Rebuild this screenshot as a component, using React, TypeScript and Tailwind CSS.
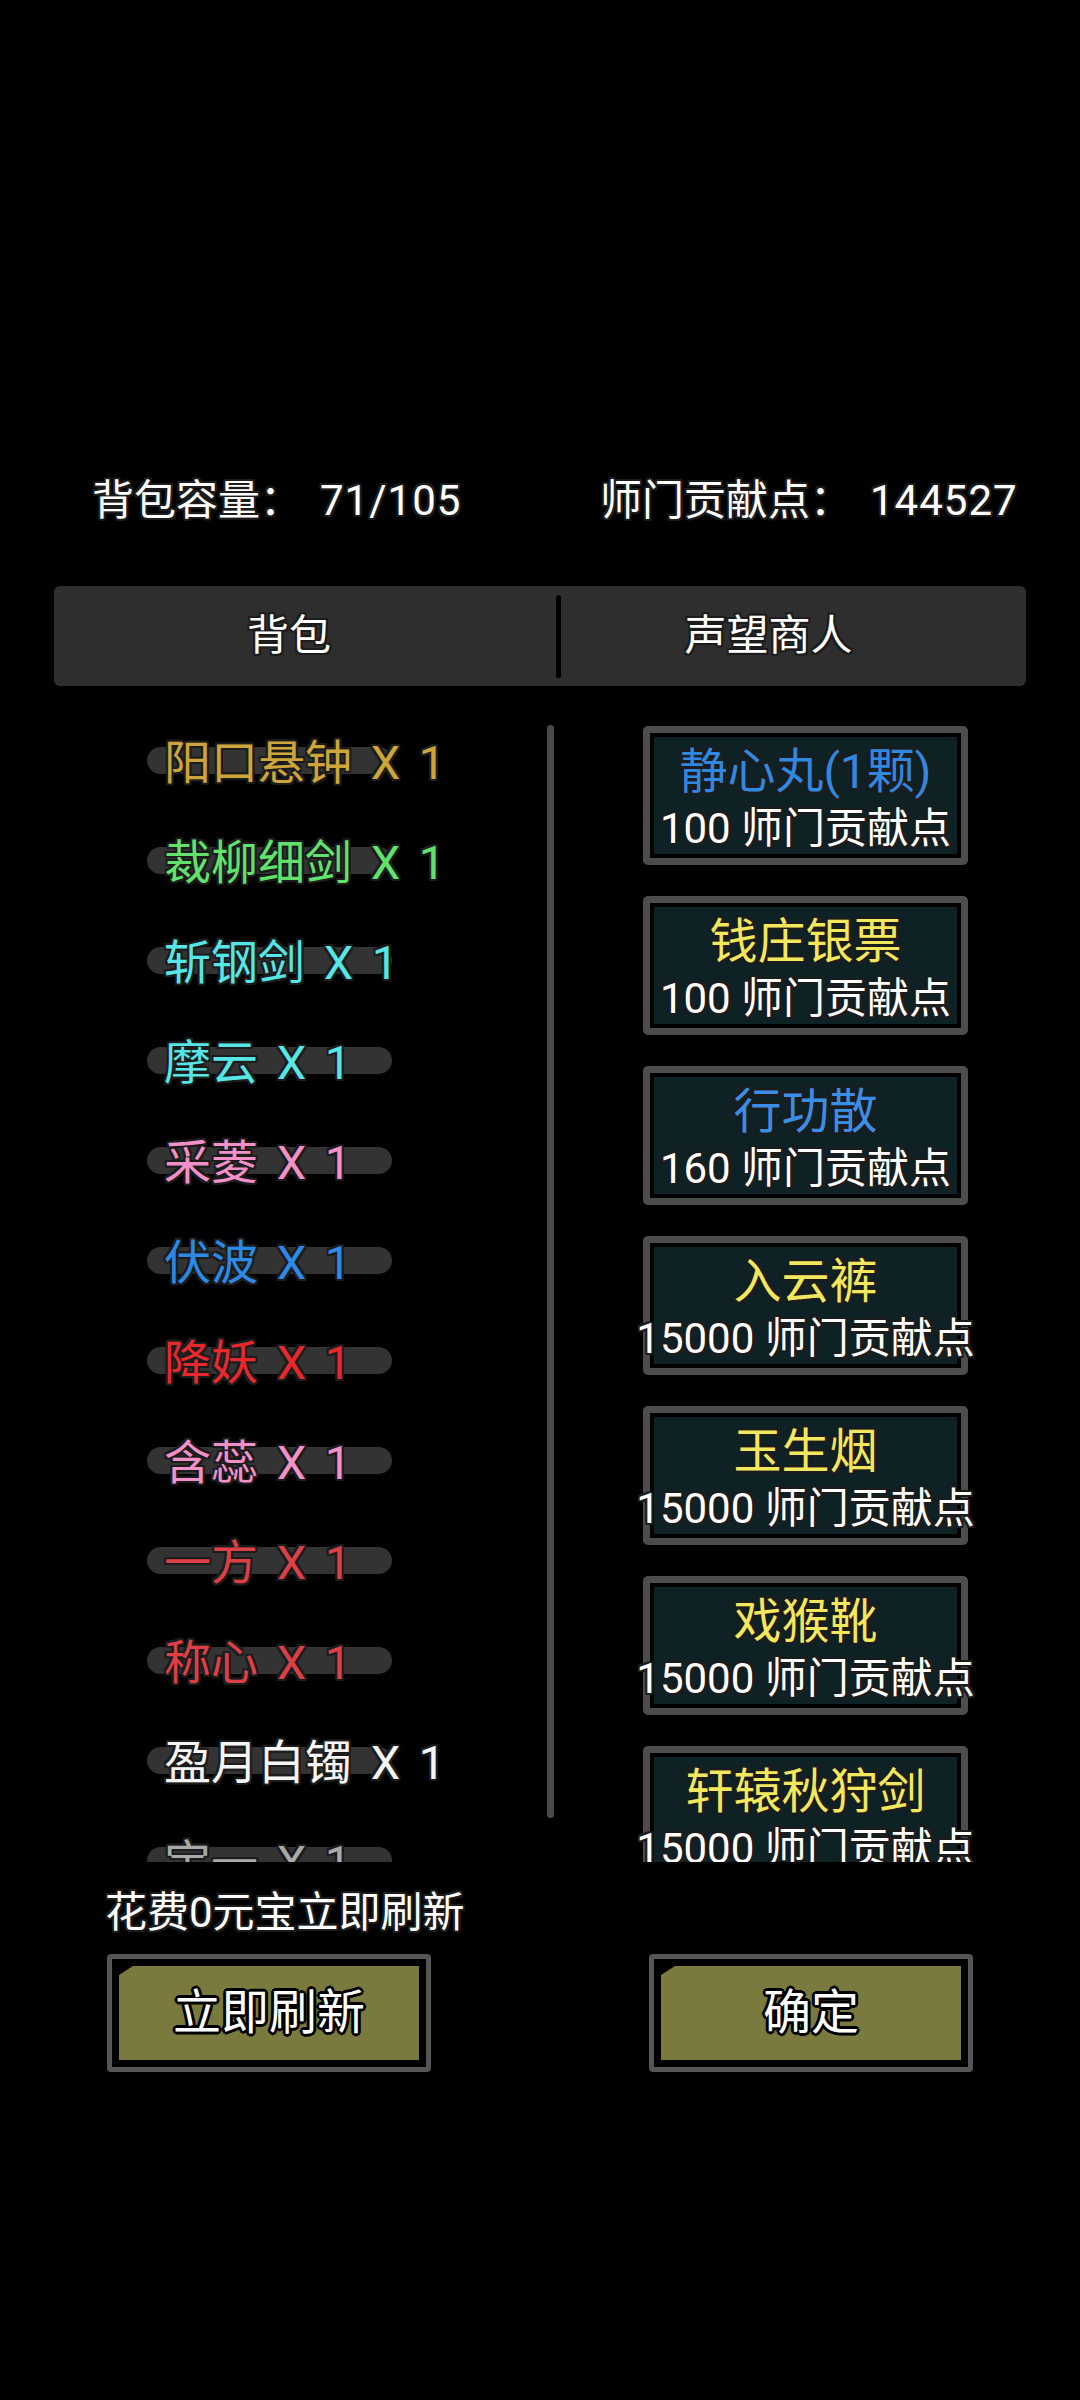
import React from 'react'

const FONT = "font-['Roboto','Noto_Sans_CJK_SC',sans-serif]"

const OUTLINE =
  '[text-shadow:2px_0_0_#1c1c1c,-2px_0_0_#1c1c1c,0_2px_0_#1c1c1c,0_-2px_0_#1c1c1c,2px_2px_0_#1c1c1c,-2px_-2px_0_#1c1c1c,2px_-2px_0_#1c1c1c,-2px_2px_0_#1c1c1c]'

const OUTLINE_BOLD =
  '[text-shadow:3px_0_0_#000,-3px_0_0_#000,0_3px_0_#000,0_-3px_0_#000,2px_2px_0_#000,-2px_-2px_0_#000,2px_-2px_0_#000,-2px_2px_0_#000]'

interface BagItem {
  name: string
  color: string
}

const BAG_ITEMS: BagItem[] = [
  { name: '阳口悬钟', color: 'text-[#cda53a]' },
  { name: '裁柳细剑', color: 'text-[#62e26c]' },
  { name: '斩钢剑', color: 'text-[#56e6e6]' },
  { name: '摩云', color: 'text-[#56e6e6]' },
  { name: '采菱', color: 'text-[#f191c8]' },
  { name: '伏波', color: 'text-[#2b8ae6]' },
  { name: '降妖', color: 'text-[#e8282c]' },
  { name: '含蕊', color: 'text-[#f191c8]' },
  { name: '一方', color: 'text-[#dc4046]' },
  { name: '称心', color: 'text-[#dc4046]' },
  { name: '盈月白镯', color: 'text-[#f4f4f4]' },
  { name: '宝一', color: 'text-[#a9a9a9]' },
]

interface ShopItem {
  name: string
  price: number
  color: string
}

const SHOP_ITEMS: ShopItem[] = [
  { name: '静心丸(1颗)', price: 100, color: 'text-[#3088e0]' },
  { name: '钱庄银票', price: 100, color: 'text-[#f2e85e]' },
  { name: '行功散', price: 160, color: 'text-[#3a8ee6]' },
  { name: '入云裤', price: 15000, color: 'text-[#f2e85e]' },
  { name: '玉生烟', price: 15000, color: 'text-[#f2e85e]' },
  { name: '戏猴靴', price: 15000, color: 'text-[#f2e85e]' },
  { name: '轩辕秋狩剑', price: 15000, color: 'text-[#f2e85e]' },
]

function BagRow({ item }: { item: BagItem }) {
  return (
    <div className="h-[100px] shrink-0 grid items-center">
      <div className="[grid-area:1/1] w-[245px] h-[27px] rounded-full bg-[#333333]" />
      <div
        className={`[grid-area:1/1] ml-[17px] pt-[6px] whitespace-nowrap text-[47px] leading-[56px] [word-spacing:7px] ${item.color} ${OUTLINE}`}
      >
        {item.name} X 1
      </div>
    </div>
  )
}

function ShopCard({ item }: { item: ShopItem }) {
  return (
    <div className="w-[325px] h-[139px] shrink-0 border-[7px] border-[#4d4d4d] rounded-[5px] bg-black p-[4px]">
      <div className="h-full bg-[#0e2226] flex flex-col items-center">
        <div className={`mt-[7px] whitespace-nowrap text-[48px] leading-[56px] ${item.color} ${OUTLINE}`}>
          {item.name}
        </div>
        <div className={`mt-[6px] whitespace-nowrap text-[42px] leading-[46px] text-white ${OUTLINE}`}>
          {item.price} 师门贡献点
        </div>
      </div>
    </div>
  )
}

function OliveButton({ label }: { label: string }) {
  return (
    <button className="w-[324px] h-[118px] border-[5px] border-[#555555] rounded-[4px] bg-black p-[7px]">
      <div className="h-full bg-[#7b7a3e] flex items-center justify-center [clip-path:polygon(14px_0,100%_0,100%_100%,0_100%,0_9px)]">
        <span className={`text-[48px] leading-[56px] text-white ${OUTLINE_BOLD}`}>{label}</span>
      </div>
    </button>
  )
}

export default function App() {
  return (
    <div className={`w-[1080px] h-[2400px] bg-black text-white ${FONT} flex flex-col`}>
      {/* header stats */}
      <div className="mt-[476px] flex pl-[92px] text-[42px] leading-[50px]">
        <span className={`w-[508px] whitespace-nowrap ${OUTLINE}`}>
          背包容量：<span className="ml-[18px] tracking-[1px]">71/105</span>
        </span>
        <span className={`whitespace-nowrap ${OUTLINE}`}>
          师门贡献点：<span className="ml-[18px] tracking-[1px]">144527</span>
        </span>
      </div>

      {/* tabs */}
      <div className="mt-[60px] mx-[54px] h-[100px] rounded-[6px] bg-[#2e2e2e] flex items-center">
        <div className="w-[502px] flex justify-center pr-[32px]">
          <span className={`text-[42px] leading-[50px] ${OUTLINE}`}>背包</span>
        </div>
        <div className="w-[5px] h-[83px] rounded-full bg-black" />
        <div className="flex-1 flex justify-center pr-[50px]">
          <span className={`text-[42px] leading-[50px] ${OUTLINE}`}>声望商人</span>
        </div>
      </div>

      {/* lists */}
      <div className="mt-[24px] h-[1152px] flex overflow-hidden">
        <div className="w-[547px] pl-[147px] flex flex-col">
          {BAG_ITEMS.map((item) => (
            <BagRow key={item.name} item={item} />
          ))}
        </div>
        <div className="mt-[15px] w-[7px] h-[1093px] rounded-full bg-[#4a4a4a]" />
        <div className="ml-[89px] pt-[16px] flex flex-col gap-[31px]">
          {SHOP_ITEMS.map((item) => (
            <ShopCard key={item.name} item={item} />
          ))}
        </div>
      </div>

      {/* refresh hint */}
      <div className={`mt-[26px] pl-[105px] text-[42px] leading-[50px] ${OUTLINE}`}>花费0元宝立即刷新</div>

      {/* actions */}
      <div className="mt-[16px] pl-[107px] flex gap-[218px]">
        <OliveButton label="立即刷新" />
        <OliveButton label="确定" />
      </div>
    </div>
  )
}
